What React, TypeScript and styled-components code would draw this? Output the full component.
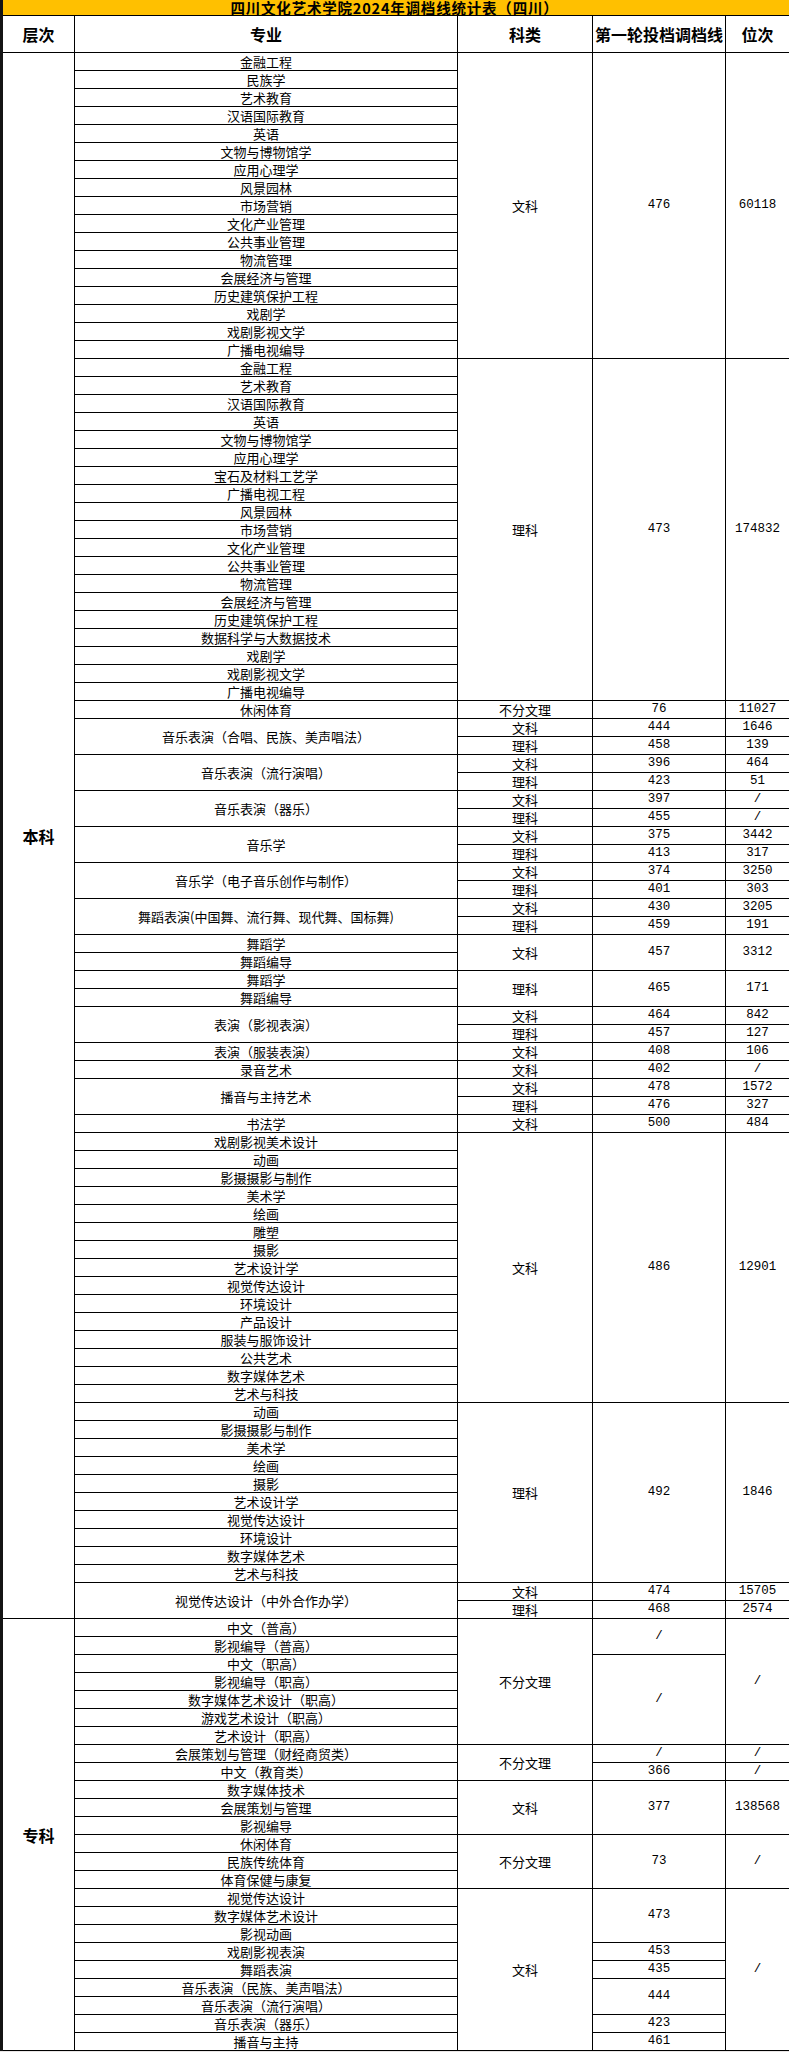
import React from 'react';
import styled, { createGlobalStyle } from 'styled-components';

const Global = createGlobalStyle`
  html, body {
    margin: 0;
    padding: 0;
    background: #e9e6e6;
  }
  body {
    font-family: "Noto Sans CJK SC", "Noto Sans", sans-serif;
    color: #000;
  }
`;

const Sheet = styled.div`
  width: 789px;
  box-sizing: border-box;
  border-left: 3px solid #141414;
`;

const Title = styled.div`
  height: 15px;
  background: #ffc000;
  border-bottom: 1px solid #000;
  display: flex;
  align-items: center;
  justify-content: center;
  font-family: "Noto Sans CJK SC", sans-serif;
  font-weight: 700;
  font-size: 14.5px;
  letter-spacing: 0.8px;
  line-height: 15px;
  white-space: nowrap;
  padding-right: 3px;
`;

const Grid = styled.div`
  display: grid;
  grid-template-columns: 71px 382px 134px 132px 1fr;
  grid-template-rows: 36px;
  grid-auto-rows: 17px;
  gap: 1px;
  background: #000;
  padding-bottom: 1px;
`;

const Cell = styled.div<{ $col: number; $span?: number }>`
  grid-column: ${(p) => p.$col};
  grid-row: span ${(p) => p.$span ?? 1};
  background: #fff;
  display: flex;
  align-items: center;
  justify-content: center;
  white-space: nowrap;
  overflow: hidden;
  line-height: 1;
`;

const HeadCell = styled(Cell)`
  font-family: "Noto Sans CJK SC", sans-serif;
  font-weight: 700;
  font-size: 16px;
`;

const LevelCell = styled(Cell)`
  font-family: "Noto Sans CJK SC", sans-serif;
  font-weight: 700;
  font-size: 16px;
`;

const TextCell = styled(Cell)`
  font-family: "Noto Sans CJK SC", sans-serif;
  font-size: 13px;
`;

const NumCell = styled(Cell)`
  font-family: "Liberation Mono", "DejaVu Sans Mono", monospace;
  font-size: 12.5px;
`;

type Span = [string, number?];
type Row = {
  level?: Span;
  major?: Span;
  type?: Span;
  score?: Span;
  rank?: Span;
};

const r = (
  major: Span | undefined,
  type?: Span,
  score?: Span,
  rank?: Span,
  level?: Span
): Row => ({ major, type, score, rank, level });

const names = (list: string[]): Row[] => list.map((n) => r([n]));

const artsA = ['金融工程', '民族学', '艺术教育', '汉语国际教育', '英语', '文物与博物馆学', '应用心理学', '风景园林', '市场营销', '文化产业管理', '公共事业管理', '物流管理', '会展经济与管理', '历史建筑保护工程', '戏剧学', '戏剧影视文学', '广播电视编导'];
const sciA = ['金融工程', '艺术教育', '汉语国际教育', '英语', '文物与博物馆学', '应用心理学', '宝石及材料工艺学', '广播电视工程', '风景园林', '市场营销', '文化产业管理', '公共事业管理', '物流管理', '会展经济与管理', '历史建筑保护工程', '数据科学与大数据技术', '戏剧学', '戏剧影视文学', '广播电视编导'];
const artsB = ['戏剧影视美术设计', '动画', '影摄摄影与制作', '美术学', '绘画', '雕塑', '摄影', '艺术设计学', '视觉传达设计', '环境设计', '产品设计', '服装与服饰设计', '公共艺术', '数字媒体艺术', '艺术与科技'];
const sciB = ['动画', '影摄摄影与制作', '美术学', '绘画', '摄影', '艺术设计学', '视觉传达设计', '环境设计', '数字媒体艺术', '艺术与科技'];

const rows: Row[] = [
  r([artsA[0]], ['文科', 17], ['476', 17], ['60118', 17], ['本科', 87]),
  ...names(artsA.slice(1)),
  r([sciA[0]], ['理科', 19], ['473', 19], ['174832', 19]),
  ...names(sciA.slice(1)),
  r(['休闲体育'], ['不分文理'], ['76'], ['11027']),
  r(['音乐表演（合唱、民族、美声唱法）', 2], ['文科'], ['444'], ['1646']),
  r(undefined, ['理科'], ['458'], ['139']),
  r(['音乐表演（流行演唱）', 2], ['文科'], ['396'], ['464']),
  r(undefined, ['理科'], ['423'], ['51']),
  r(['音乐表演（器乐）', 2], ['文科'], ['397'], ['/']),
  r(undefined, ['理科'], ['455'], ['/']),
  r(['音乐学', 2], ['文科'], ['375'], ['3442']),
  r(undefined, ['理科'], ['413'], ['317']),
  r(['音乐学（电子音乐创作与制作）', 2], ['文科'], ['374'], ['3250']),
  r(undefined, ['理科'], ['401'], ['303']),
  r(['舞蹈表演(中国舞、流行舞、现代舞、国标舞)', 2], ['文科'], ['430'], ['3205']),
  r(undefined, ['理科'], ['459'], ['191']),
  r(['舞蹈学'], ['文科', 2], ['457', 2], ['3312', 2]),
  r(['舞蹈编导']),
  r(['舞蹈学'], ['理科', 2], ['465', 2], ['171', 2]),
  r(['舞蹈编导']),
  r(['表演（影视表演）', 2], ['文科'], ['464'], ['842']),
  r(undefined, ['理科'], ['457'], ['127']),
  r(['表演（服装表演）'], ['文科'], ['408'], ['106']),
  r(['录音艺术'], ['文科'], ['402'], ['/']),
  r(['播音与主持艺术', 2], ['文科'], ['478'], ['1572']),
  r(undefined, ['理科'], ['476'], ['327']),
  r(['书法学'], ['文科'], ['500'], ['484']),
  r([artsB[0]], ['文科', 15], ['486', 15], ['12901', 15]),
  ...names(artsB.slice(1)),
  r([sciB[0]], ['理科', 10], ['492', 10], ['1846', 10]),
  ...names(sciB.slice(1)),
  r(['视觉传达设计（中外合作办学）', 2], ['文科'], ['474'], ['15705']),
  r(undefined, ['理科'], ['468'], ['2574']),

  r(['中文（普高）'], ['不分文理', 7], ['/', 2], ['/', 7], ['专科', 24]),
  r(['影视编导（普高）']),
  r(['中文（职高）'], undefined, ['/', 5]),
  r(['影视编导（职高）']),
  r(['数字媒体艺术设计（职高）']),
  r(['游戏艺术设计（职高）']),
  r(['艺术设计（职高）']),
  r(['会展策划与管理（财经商贸类）'], ['不分文理', 2], ['/'], ['/']),
  r(['中文（教育类）'], undefined, ['366'], ['/']),
  r(['数字媒体技术'], ['文科', 3], ['377', 3], ['138568', 3]),
  r(['会展策划与管理']),
  r(['影视编导']),
  r(['休闲体育'], ['不分文理', 3], ['73', 3], ['/', 3]),
  r(['民族传统体育']),
  r(['体育保健与康复']),
  r(['视觉传达设计'], ['文科', 9], ['473', 3], ['/', 9]),
  r(['数字媒体艺术设计']),
  r(['影视动画']),
  r(['戏剧影视表演'], undefined, ['453']),
  r(['舞蹈表演'], undefined, ['435']),
  r(['音乐表演（民族、美声唱法）'], undefined, ['444', 2]),
  r(['音乐表演（流行演唱）']),
  r(['音乐表演（器乐）'], undefined, ['423']),
  r(['播音与主持'], undefined, ['461']),
];

const headers = ['层次', '专业', '科类', '第一轮投档调档线', '位次'];

export default function App() {
  const cells: React.ReactNode[] = [];
  rows.forEach((row, i) => {
    if (row.level)
      cells.push(
        <LevelCell key={`l${i}`} $col={1} $span={row.level[1]}>
          {row.level[0]}
        </LevelCell>
      );
    if (row.major)
      cells.push(
        <TextCell key={`m${i}`} $col={2} $span={row.major[1]}>
          {row.major[0]}
        </TextCell>
      );
    if (row.type)
      cells.push(
        <TextCell key={`t${i}`} $col={3} $span={row.type[1]}>
          {row.type[0]}
        </TextCell>
      );
    if (row.score)
      cells.push(
        <NumCell key={`s${i}`} $col={4} $span={row.score[1]}>
          {row.score[0]}
        </NumCell>
      );
    if (row.rank)
      cells.push(
        <NumCell key={`r${i}`} $col={5} $span={row.rank[1]}>
          {row.rank[0]}
        </NumCell>
      );
  });

  return (
    <>
      <Global />
      <Sheet>
        <Title>四川文化艺术学院2024年调档线统计表（四川）</Title>
        <Grid>
          {headers.map((h, i) => (
            <HeadCell key={h} $col={i + 1}>
              {h}
            </HeadCell>
          ))}
          {cells}
        </Grid>
      </Sheet>
    </>
  );
}
